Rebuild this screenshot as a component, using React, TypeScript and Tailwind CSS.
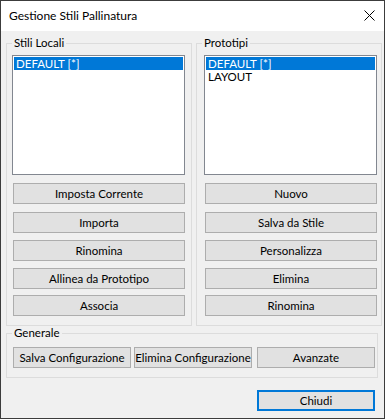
import React from "react";

function Btn({ label, className = "" }: { label: string; className?: string }) {
  return (
    <div
      className={
        "h-[21px] bg-[#e1e1e1] border border-[#adadad] flex items-center justify-center text-[11.5px] leading-[13px] text-black whitespace-nowrap " +
        className
      }
    >
      {label}
    </div>
  );
}

function GroupLabel({ text }: { text: string }) {
  return (
    <div className="absolute left-[5px] top-[-8px] h-[14px] leading-[14px] px-[2px] bg-[#f0f0f0] text-[11.5px] text-black whitespace-nowrap">
      {text}
    </div>
  );
}

function ListBox({ items, className = "" }: { items: string[]; className?: string }) {
  return (
    <div className={"w-[173px] h-[120px] bg-white border border-[#828790] p-[1px] " + className}>
      {items.map((it, i) => (
        <div
          key={it}
          className={
            "h-[13px] leading-[13px] pl-[2px] text-[11.5px] whitespace-nowrap " +
            (i === 0 ? "bg-[#0078d7] text-white" : "text-black")
          }
        >
          {it}
        </div>
      ))}
    </div>
  );
}

export default function App() {
  return (
    <div className="w-[385px] h-[419px] border border-[#3c3c3c] flex flex-col bg-[#f0f0f0] overflow-hidden font-[Lato,sans-serif]">
      <div className="h-[30px] bg-white flex items-start">
        <div className="pl-[8px] h-[30px] flex items-center text-[12px] text-black flex-1">
          Gestione Stili Pallinatura
        </div>
        <svg width="11" height="11" viewBox="0 0 11 11" className="mt-[9px] mr-[9px]">
          <path d="M0.5 0.5 L10.5 10.5 M10.5 0.5 L0.5 10.5" stroke="#000" strokeWidth="1" />
        </svg>
      </div>

      <div className="flex flex-col pl-[5px] pt-[12px]">
        <div className="flex gap-[4px]">
          <div className="relative w-[186px] h-[283px] border border-[#dcdcdc] flex flex-col">
            <GroupLabel text="Stili Locali" />
            <ListBox items={["DEFAULT [*]"]} className="ml-[5px] mt-[11px]" />
            <Btn label="Imposta Corrente" className="ml-[6px] w-[172px] mt-[8px]" />
            <Btn label="Importa" className="ml-[6px] w-[172px] mt-[8px]" />
            <Btn label="Rinomina" className="ml-[6px] w-[172px] mt-[7px]" />
            <Btn label="Allinea da Prototipo" className="ml-[6px] w-[172px] mt-[7px]" />
            <Btn label="Associa" className="ml-[6px] w-[172px] mt-[6px]" />
          </div>
          <div className="relative w-[186px] h-[283px] border border-[#dcdcdc] flex flex-col">
            <GroupLabel text="Prototipi" />
            <ListBox items={["DEFAULT [*]", "LAYOUT"]} className="ml-[7px] mt-[11px]" />
            <Btn label="Nuovo" className="ml-[8px] w-[172px] mt-[8px]" />
            <Btn label="Salva da Stile" className="ml-[8px] w-[172px] mt-[8px]" />
            <Btn label="Personalizza" className="ml-[8px] w-[172px] mt-[7px]" />
            <Btn label="Elimina" className="ml-[8px] w-[172px] mt-[7px]" />
            <Btn label="Rinomina" className="ml-[8px] w-[172px] mt-[6px]" />
          </div>
        </div>

        <div className="relative mt-[7px] w-[372px] h-[45px] border border-[#dcdcdc] flex items-start pt-[13px] pl-[6px]">
          <GroupLabel text="Generale" />
          <Btn label="Salva Configurazione" className="w-[118px]" />
          <Btn label="Elimina Configurazione" className="w-[118px] ml-[3px]" />
          <Btn label="Avanzate" className="w-[118px] ml-[5px]" />
        </div>

        <div className="flex justify-end mt-[12px] pr-[9px]">
          <div className="w-[118px] h-[21px] bg-[#e1e1e1] border-2 border-[#0078d7] flex items-center justify-center text-[11.5px] leading-[13px] text-black">
            Chiudi
          </div>
        </div>
      </div>
    </div>
  );
}
